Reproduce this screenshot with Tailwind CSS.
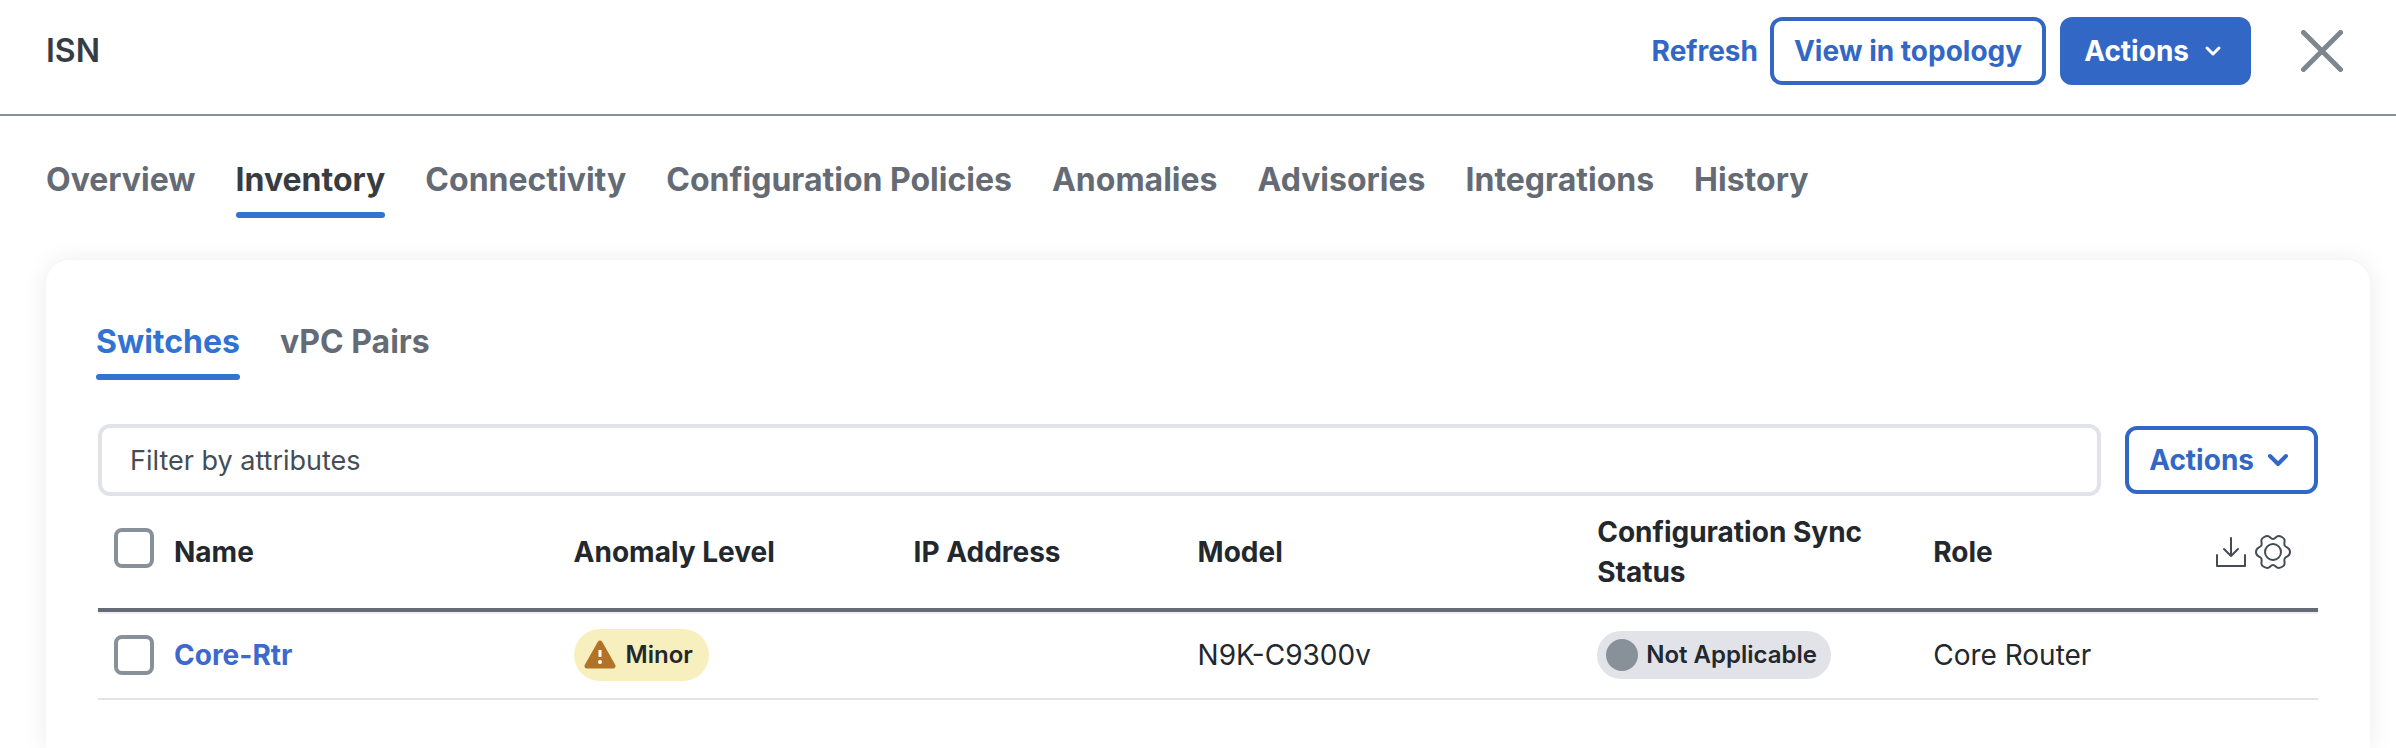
<!DOCTYPE html>
<html lang="en">
<head>
    <meta charset="UTF-8">
    <meta name="viewport" content="width=device-width, initial-scale=1.0">
    <title>ISN - Inventory</title>
    <script src="https://cdn.jsdelivr.net/npm/@tailwindcss/browser@4"></script>
</head>
<body class="bg-white font-['Inter',sans-serif] text-[28px] leading-10 text-[#23282e] min-h-screen flex flex-col overflow-x-hidden">
    <!-- Header -->
    <header class="flex items-center justify-between h-[116px] pb-3 pl-[46px] pr-[53px] border-b-2 border-[#889099]">
        <h1 class="text-[32px] font-semibold text-[#373c42]">ISN</h1>
        <div class="flex items-center">
            <a href="#" class="font-bold text-[#3367c6] mr-3">Refresh</a>
            <button class="h-[68px] px-5 border-4 border-[#3367c6] rounded-xl font-bold text-[#3367c6] mr-[14px]">View in topology</button>
            <button class="h-[68px] pl-6 pr-7 rounded-xl bg-[#3367c6] font-bold text-white flex items-center gap-[14px]">
                Actions
                <svg class="w-5 h-5" viewBox="0 0 20 20" fill="none" stroke="currentColor" stroke-width="3" stroke-linecap="round" stroke-linejoin="round"><path d="M4 7l6 6 6-6"/></svg>
            </button>
            <button aria-label="Close" class="ml-[50px] text-[#7e868e]">
                <svg class="w-[42px] h-[42px]" viewBox="0 0 42 42" fill="none" stroke="currentColor" stroke-width="5" stroke-linecap="round"><path d="M2.500 2.500l37 37M39.500 2.500l-37 37"/></svg>
            </button>
        </div>
    </header>

    <!-- Main tabs -->
    <nav class="flex gap-10 pl-[46px] pt-11 text-[32px] font-bold text-[#656b75]">
        <a href="#">Overview</a>
        <a href="#" class="text-[#373c42]">Inventory<span class="block mt-3 h-[6px] rounded-full bg-[#3273d2]"></span></a>
        <a href="#">Connectivity</a>
        <a href="#">Configuration Policies</a>
        <a href="#">Anomalies</a>
        <a href="#">Advisories</a>
        <a href="#">Integrations</a>
        <a href="#">History</a>
    </nav>

    <main class="grow mt-[42px] ml-[46px] mr-[26px] px-[52px] pt-[62px] rounded-t-3xl shadow-[0_0_24px_rgba(0,0,0,0.08)]">
        <!-- Inventory sub tabs -->
        <nav class="flex gap-10 -ml-[2px] text-[32px] font-bold text-[#656b75]">
            <a href="#" class="text-[#3273d2]">Switches<span class="block mt-3 h-[6px] rounded-full bg-[#3273d2]"></span></a>
            <a href="#">vPC Pairs</a>
        </nav>

        <div class="flex items-center gap-6 mt-11">
            <input type="text" aria-label="Filter by attributes" placeholder="Filter by attributes" class="grow min-w-0 h-[72px] px-7 border-4 border-[#e1e3e8] rounded-xl text-[27px] placeholder:text-[#464c54]">
            <button class="h-[68px] pl-5 pr-6 border-4 border-[#3367c6] rounded-xl font-bold text-[#3367c6] flex items-center gap-3">
                Actions
                <svg class="w-6 h-6" viewBox="0 0 24 24" fill="none" stroke="currentColor" stroke-width="4" stroke-linecap="round" stroke-linejoin="round"><path d="M4 8l8 8 8-8"/></svg>
            </button>
        </div>

        <!-- Switches table -->
        <table class="w-full table-fixed text-left">
            <colgroup>
                <col class="w-[76px]">
                <col class="w-[18%]">
                <col class="w-[340px]">
                <col class="w-[284px]">
                <col class="w-[18%]">
                <col class="w-[336px]">
                <col class="w-[260px]">
                <col>
            </colgroup>
            <thead>
                <tr class="h-[114px] border-b-4 border-[#656b75]">
                    <th class="pl-4 pb-2"><input type="checkbox" aria-label="Select all" class="appearance-none block w-10 h-10 border-4 border-[#889099] rounded-lg"></th>
                    <th class="font-bold">Name</th>
                    <th class="font-bold">Anomaly Level</th>
                    <th class="font-bold">IP Address</th>
                    <th class="font-bold">Model</th>
                    <th class="font-bold">Configuration Sync<br>Status</th>
                    <th class="font-bold">Role</th>
                    <th class="pr-[27px]">
                        <div class="flex items-center justify-end gap-2 text-[#464c54]">
                            <button aria-label="Download">
                                <svg class="w-8 h-8" viewBox="0 0 32 32" fill="none" stroke="currentColor" stroke-width="2" stroke-linecap="round" stroke-linejoin="round"><path d="M16 2v18M9 13l7 7 7-7M2 19v11h28V19"/></svg>
                            </button>
                            <button aria-label="Table settings">
                                <svg class="w-9 h-9" viewBox="0 0 36 36" fill="none" stroke="currentColor" stroke-width="2" stroke-linejoin="round"><circle cx="18" cy="18" r="8"/><path d="M18 5C20.500 5 21 2 23.500 2C25.500 2 29.500 4 29.500 6C30 8 28.500 10 30 12C31.500 14 35 13 35 18S31.500 22 30 24C28.500 26 30 28 29.500 30C29.500 32 25.500 34 23.500 34C21 34 20.500 31 18 31S15 34 12.500 34C10.500 34 6.500 32 6.500 30C6 28 7.500 26 6 24C4.500 22 1 23 1 18S4.500 14 6 12C7.500 10 6 8 6.500 6C6.500 4 10.500 2 12.500 2C15 2 15.500 5 18 5Z"/></svg>
                            </button>
                        </div>
                    </th>
                </tr>
            </thead>
            <tbody>
                <tr class="h-[89px] border-b-2 border-[#e1e3e8] shadow-[inset_0_4px_#f0f0f2]">
                    <td class="pl-4"><input type="checkbox" aria-label="Select Core-Rtr" class="appearance-none block w-10 h-10 border-4 border-[#889099] rounded-lg"></td>
                    <td><a href="#" class="font-bold text-[#3d69cc]">Core-Rtr</a></td>
                    <td>
                        <span class="flex w-fit items-center h-[52px] pl-[10px] pr-4 gap-[10px] rounded-full bg-[#f8efbe] text-2xl font-semibold">
                            <svg class="w-8 h-[30px]" viewBox="0 0 32 30"><path d="M16 3L29 26H3Z" fill="#b27328" stroke="#b27328" stroke-width="5" stroke-linejoin="round"/><path d="M16 10v7" stroke="#fff" stroke-width="3"/><circle cx="16" cy="22" r="2" fill="#fff"/></svg>
                            Minor
                        </span>
                    </td>
                    <td></td>
                    <td>N9K-C9300v</td>
                    <td>
                        <span class="flex w-fit items-center h-12 pl-[9px] pr-[14px] gap-2 rounded-full bg-[#e1e3e8] text-2xl font-semibold">
                            <span class="w-8 h-8 rounded-full bg-[#889099]"></span>
                            Not Applicable
                        </span>
                    </td>
                    <td>Core Router</td>
                    <td></td>
                </tr>
            </tbody>
        </table>
    </main>
</body>
</html>
